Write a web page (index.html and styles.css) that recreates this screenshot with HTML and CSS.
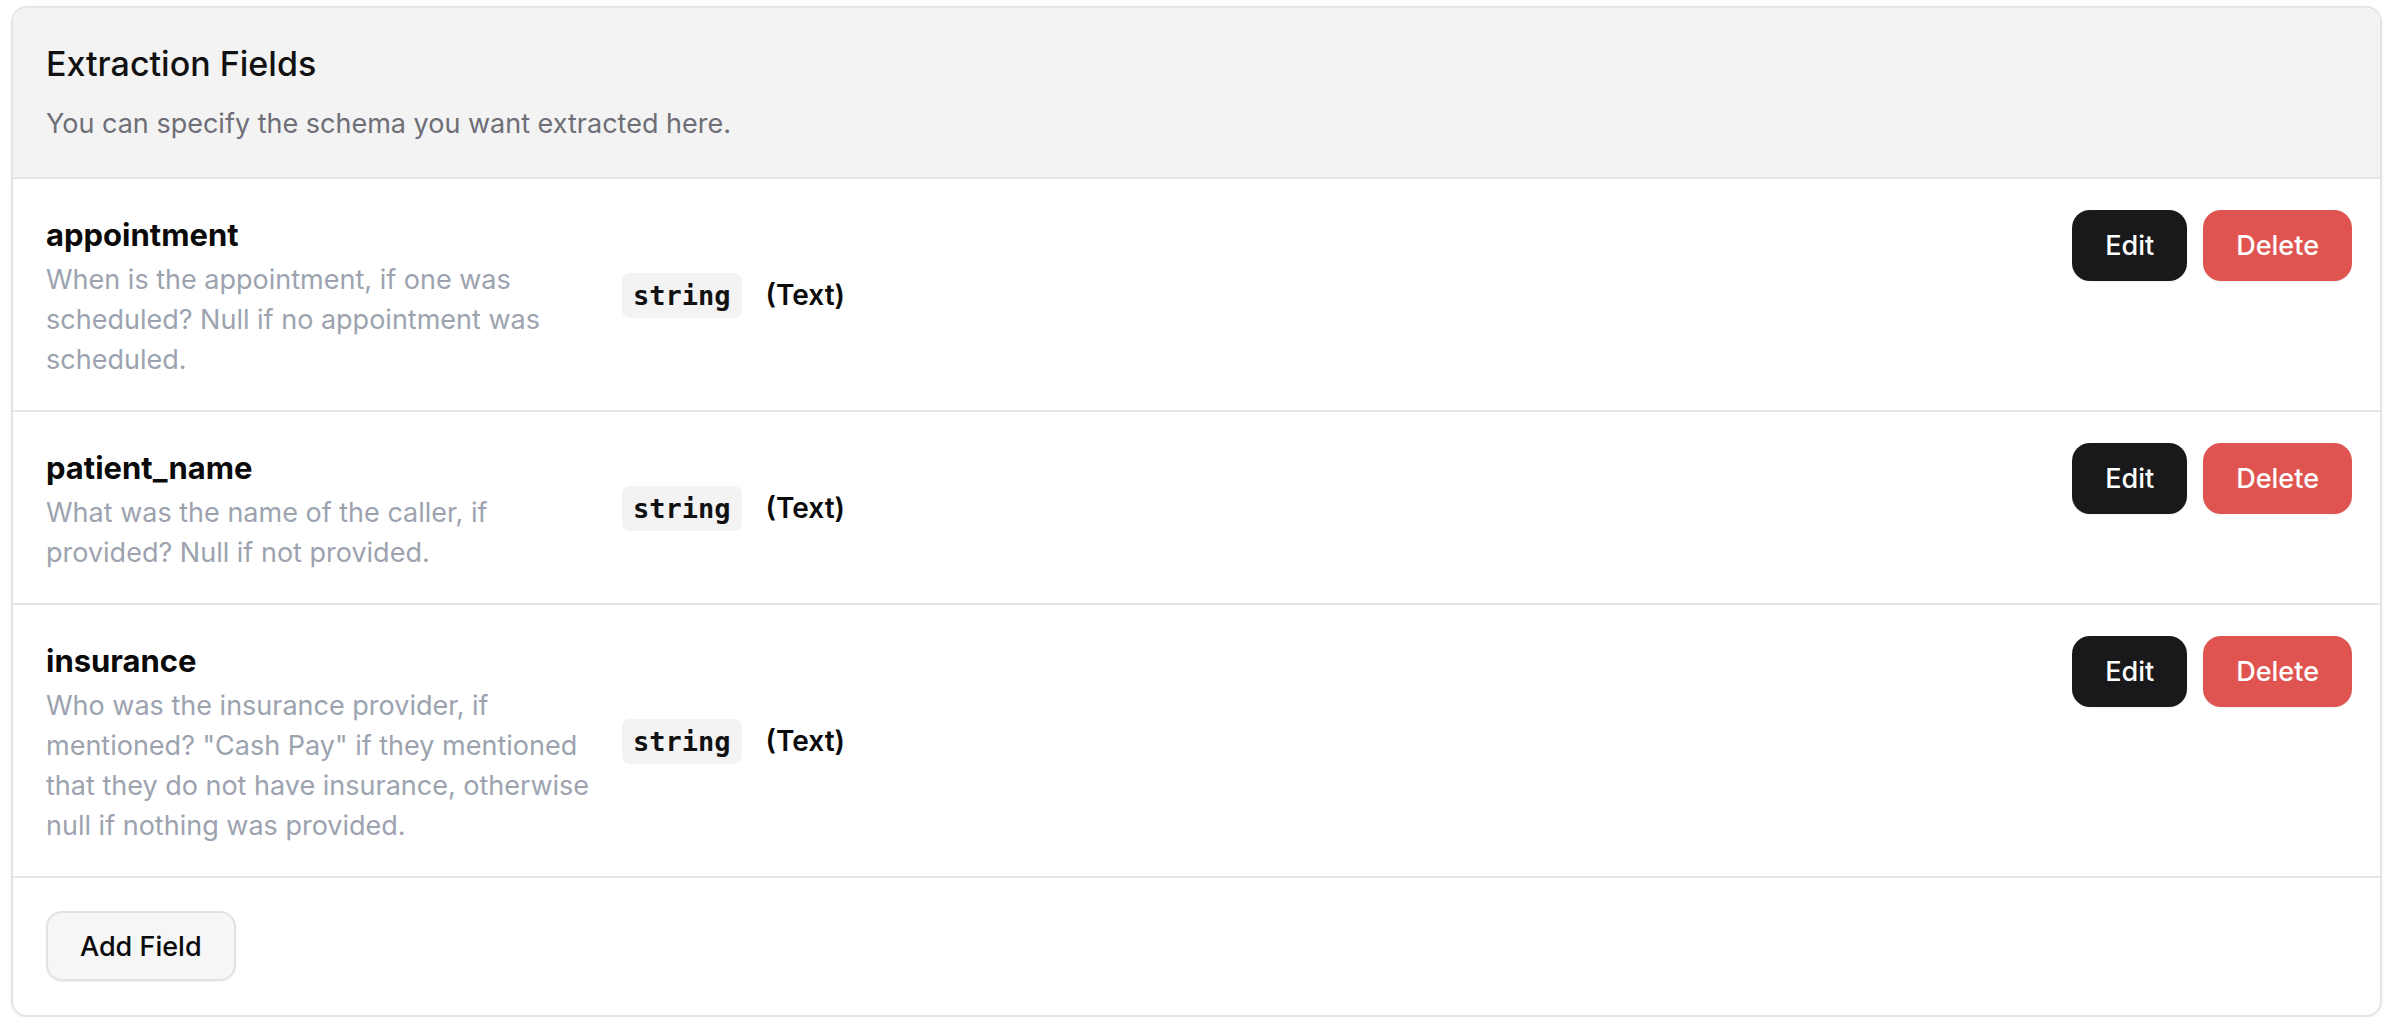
FILE: index.html
```html
<!DOCTYPE html>
<html lang="en">
<head>
  <meta charset="UTF-8" />
  <meta name="viewport" content="width=device-width, initial-scale=1.0"/>
  <title>Extraction Fields</title>
  <link rel="stylesheet" href="styles.css">
</head>
<body>
  <div class="card">
    <div class="card-header">
      <h2>Extraction Fields</h2>
      <p>You can specify the schema you want extracted here.</p>
    </div>

    <div class="field-row">
      <div class="field-info">
        <div class="field-text">
          <div class="field-name">appointment</div>
          <div class="field-desc">When is the appointment, if one was scheduled? Null if no appointment was scheduled.</div>
        </div>
        <code class="field-type">string</code>
        <span class="field-label">(Text)</span>
      </div>
      <div class="actions">
        <button type="button" class="btn-edit">Edit</button>
        <button type="button" class="btn-delete">Delete</button>
      </div>
    </div>

    <div class="field-row">
      <div class="field-info">
        <div class="field-text">
          <div class="field-name">patient_name</div>
          <div class="field-desc">What was the name of the caller, if provided? Null if not provided.</div>
        </div>
        <code class="field-type">string</code>
        <span class="field-label">(Text)</span>
      </div>
      <div class="actions">
        <button type="button" class="btn-edit">Edit</button>
        <button type="button" class="btn-delete">Delete</button>
      </div>
    </div>

    <div class="field-row">
      <div class="field-info">
        <div class="field-text">
          <div class="field-name">insurance</div>
          <div class="field-desc">Who was the insurance provider, if mentioned? "Cash Pay" if they mentioned that they do not have insurance, otherwise null if nothing was provided.</div>
        </div>
        <code class="field-type">string</code>
        <span class="field-label">(Text)</span>
      </div>
      <div class="actions">
        <button type="button" class="btn-edit">Edit</button>
        <button type="button" class="btn-delete">Delete</button>
      </div>
    </div>

    <div class="card-footer">
      <button type="button" class="btn-add">Add Field</button>
    </div>
  </div>
</body>
</html>
```

FILE: styles.css
```css
body {
  margin: 0;
  padding: 6px 10px 0 11px;
  background: #ffffff;
  font-family: Inter, 'Noto Sans', sans-serif;
  color: #0a0a0a;
}

.card {
  border: 2px solid #e4e4e4;
  border-radius: 16px;
  overflow: hidden;
  box-shadow: 0 1px 3px rgba(0, 0, 0, 0.06);
}

.card-header {
  background: #f3f3f3;
  padding: 34px 33px 35px;
  border-bottom: 2px solid #e4e4e4;
}

.card-header h2 {
  margin: 0;
  font-size: 34px;
  line-height: 44px;
  font-weight: 500;
  color: #111111;
}

.card-header p {
  margin: 20px 0 0;
  font-size: 27px;
  line-height: 36px;
  color: #6e6e76;
}

.field-row {
  display: flex;
  align-items: flex-start;
  padding: 31px 28px 30px 33px;
  border-bottom: 2px solid #e4e4e4;
}

.field-info {
  display: flex;
  align-items: center;
  gap: 24px;
  flex: 1;
}

.field-text {
  width: 552px;
}

.field-name {
  font-size: 31px;
  line-height: 50px;
  font-weight: 700;
}

.field-desc {
  font-size: 27px;
  line-height: 40px;
  color: #9ca3af;
}

.field-type {
  background: #f3f3f3;
  border-radius: 8px;
  padding: 0 11px;
  line-height: 45px;
  font-family: 'DejaVu Sans Mono', monospace;
  font-size: 27px;
  font-weight: 700;
  color: #111111;
}

.field-label {
  font-size: 28px;
  font-weight: 600;
}

.actions {
  display: flex;
  gap: 16px;
}

.actions button,
.btn-add {
  height: 71px;
  padding: 0 33px;
  border: none;
  border-radius: 18px;
  font-family: Inter, 'Noto Sans', sans-serif;
  font-size: 27px;
  font-weight: 500;
  color: #ffffff;
  cursor: pointer;
  box-shadow: 0 1px 2px rgba(0, 0, 0, 0.06);
}

.btn-edit {
  background: #19191b;
}

.btn-delete {
  background: #df5450;
}

.card-footer {
  padding: 33px 33px 34px;
}

.btn-add {
  height: 70px;
  padding: 0 32px;
  background: #f6f6f6;
  border: 2px solid #e2e2e2;
  border-radius: 16px;
  color: #0a0a0a;
}
```
